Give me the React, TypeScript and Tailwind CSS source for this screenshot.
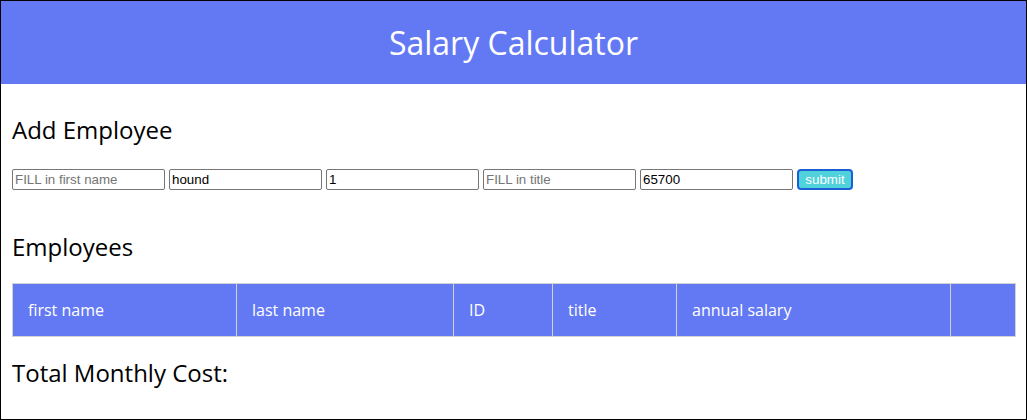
import React from "react";

const columns = [
  { label: "first name", width: "w-[224px]" },
  { label: "last name", width: "w-[217px]" },
  { label: "ID", width: "w-[99px]" },
  { label: "title", width: "w-[124px]" },
  { label: "annual salary", width: "w-[274px]" },
  { label: "", width: "w-[65px]" },
];

const fields = [
  { placeholder: "FILL in first name", value: "" },
  { placeholder: "FILL in last name", value: "hound" },
  { placeholder: "FILL in ID", value: "1" },
  { placeholder: "FILL in title", value: "" },
  { placeholder: "FILL in annual salary", value: "65700" },
];

export default function App() {
  return (
    <div className="w-[1027px] h-[420px] border border-black bg-white font-['Open_Sans',sans-serif] text-black overflow-hidden">
      <header className="h-[83px] bg-[#6379f4] flex items-center justify-center">
        <h1 className="text-[32px] leading-[44px] font-normal text-white">Salary Calculator</h1>
      </header>

      <main className="px-[11px]">
        <h2 className="mt-[29px] text-[24px] leading-[33px] font-normal">Add Employee</h2>

        <form className="mt-[23px] flex items-center gap-[4px]" onSubmit={(e) => e.preventDefault()}>
          {fields.map((f) => (
            <input
              key={f.placeholder}
              defaultValue={f.value}
              placeholder={f.placeholder}
              className="w-[153px] h-[21px] border border-[#767676] rounded-[2px] px-[2px] font-['Liberation_Sans',Arial,sans-serif] text-[13.33px] text-black placeholder:text-[#757575] bg-white"
            />
          ))}
          <button
            type="submit"
            className="w-[56px] h-[21px] border-2 border-[#1c5fd4] rounded-[4px] bg-[#50d2dc] text-white font-['Liberation_Sans',Arial,sans-serif] text-[13.33px] leading-none"
          >
            submit
          </button>
        </form>

        <h2 className="mt-[40px] text-[24px] leading-[33px] font-normal">Employees</h2>

        <div className="mt-[20px] flex w-[1004px] h-[54px] border-l border-y border-[#d2d2d2] bg-[#6379f4]">
          {columns.map((c, i) => (
            <div
              key={i}
              className={`${c.width} h-full border-r border-[#d2d2d2] flex items-center pl-[15px] text-white text-[16px]`}
            >
              {c.label}
            </div>
          ))}
        </div>

        <h2 className="mt-[19px] text-[24px] leading-[33px] font-normal">Total Monthly Cost:</h2>
      </main>
    </div>
  );
}
